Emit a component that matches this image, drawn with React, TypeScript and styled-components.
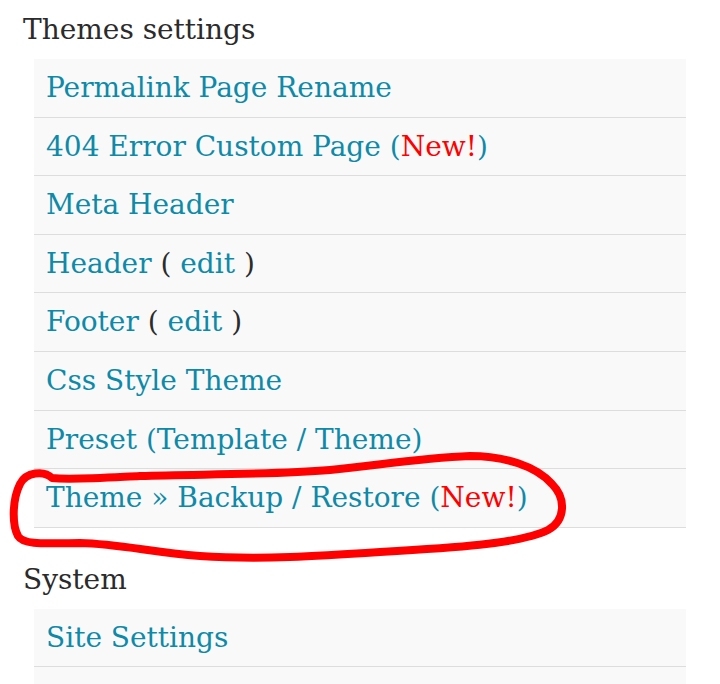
import styled, { createGlobalStyle } from 'styled-components';

const GlobalStyle = createGlobalStyle`
  body {
    margin: 0;
    background: #fff;
    font-family: "DejaVu Serif", "Liberation Serif", serif;
  }
`;

const Page = styled.main`
  position: relative;
  height: 684px;
  overflow: hidden;
  padding: 8px 34px 0 23px;
  box-sizing: border-box;
`;

const Section = styled.section`
  & + & {
    margin-top: 30px;
  }
`;

const Heading = styled.h2`
  margin: 0 0 7px;
  font-size: 28px;
  font-weight: 400;
  line-height: 44px;
  color: #2b2b2b;
`;

const List = styled.ul`
  list-style: none;
  margin: 0 0 0 11px;
  padding: 0;
`;

const Row = styled.li`
  background: #f9f9f9;
  border-bottom: 1px solid #dddddd;
  padding: 0 12px;
  line-height: 57.6px;
  font-size: 28px;
  color: #2b2b2b;
  white-space: nowrap;
`;

const Link = styled.a`
  color: #0e8aa9;
  text-decoration: none;
`;

const New = styled.span`
  color: #ff0000;
`;

const Scribble = styled.svg`
  position: absolute;
  left: 0;
  top: 0;
  pointer-events: none;
`;

export default function App() {
  return (
    <>
      <GlobalStyle />
      <Page>
        <Section>
          <Heading>Themes settings</Heading>
          <List>
            <Row><Link href="#">Permalink Page Rename</Link></Row>
            <Row><Link href="#">404 Error Custom Page (<New>New!</New>)</Link></Row>
            <Row><Link href="#">Meta Header</Link></Row>
            <Row><Link href="#">Header</Link> ( <Link href="#">edit</Link> )</Row>
            <Row><Link href="#">Footer</Link> ( <Link href="#">edit</Link> )</Row>
            <Row><Link href="#">Css Style Theme</Link></Row>
            <Row><Link href="#">Preset (Template / Theme)</Link></Row>
            <Row><Link href="#">Theme » Backup / Restore (<New>New!</New>)</Link></Row>
          </List>
        </Section>
        <Section>
          <Heading>System</Heading>
          <List>
            <Row><Link href="#">Site Settings</Link></Row>
            <Row><Link href="#">Updates</Link></Row>
          </List>
        </Section>
        <Scribble width="720" height="684" viewBox="0 0 720 684">
          <path
            d="M52 478 C44 470 26 472 20 484 C12 500 12 525 18 536 C24 546 50 543 80 543 C120 544 150 552 200 556 C260 560 320 556 380 552 C450 548 520 544 548 530 C566 520 566 498 552 484 C536 466 505 456 470 456 C420 458 380 465 330 470 C270 475 200 474 140 476 C100 478 70 480 52 478 Z"
            fill="none"
            stroke="#ff0000"
            strokeWidth="8"
            strokeLinecap="round"
            strokeLinejoin="round"
          />
        </Scribble>
      </Page>
    </>
  );
}
